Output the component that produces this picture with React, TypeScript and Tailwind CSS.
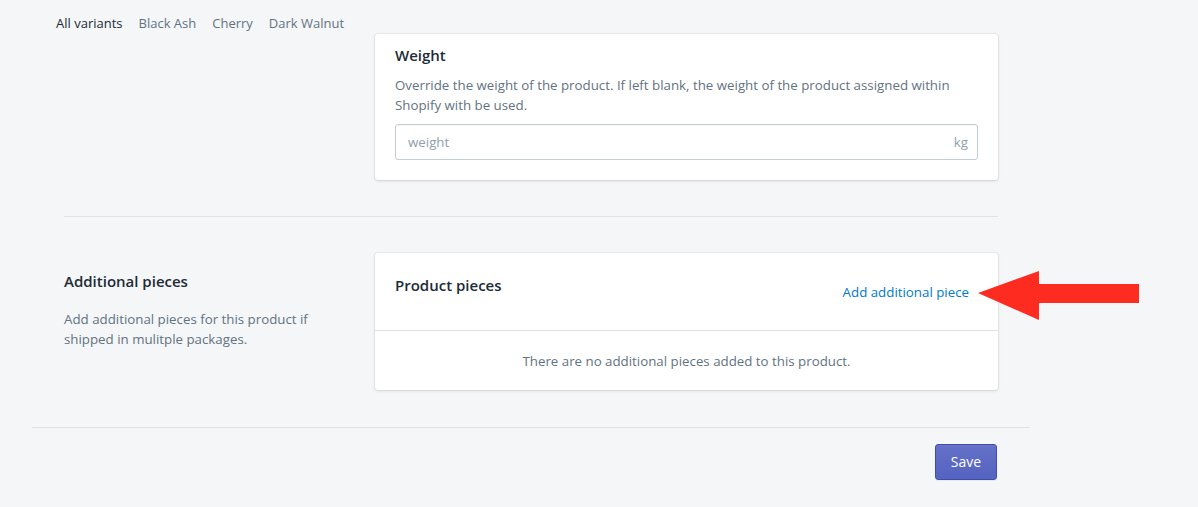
import React from 'react'

const variants = ['All variants', 'Black Ash', 'Cherry', 'Dark Walnut']

function Card({ children, className = '' }: { children: React.ReactNode; className?: string }) {
    return (
        <div
            className={`bg-white rounded-[3px] shadow-[0_0_0_1px_rgba(63,63,68,0.05),0_1px_3px_0_rgba(63,63,68,0.15)] ${className}`}
        >
            {children}
        </div>
    )
}

export default function App() {
    return (
        <div
            className="relative min-h-[507px] bg-[#f4f6f8] text-[13.3px] leading-[20px] text-[#212b36]"
            style={{ fontFamily: '"Open Sans", "Noto Sans", sans-serif' }}
        >
            <div className="ml-[32px] w-[998px]">
                {/* variant tabs */}
                <div className="flex h-[34px] gap-[16px] pl-[24px] pt-[13px] text-[13px]">
                    {variants.map((v, i) => (
                        <span key={v} className={i === 0 ? 'text-[#212b36]' : 'text-[#637381]'}>
                            {v}
                        </span>
                    ))}
                </div>

                <div className="px-[32px]">
                    {/* weight section */}
                    <div className="grid grid-cols-[311px_1fr]">
                        <div />
                        <Card className="px-[20px] pt-[9px] pb-[20px]">
                            <h2 className="text-[15px] leading-[24px] font-semibold">Weight</h2>
                            <p className="mt-[8px] text-[#637381]">
                                Override the weight of the product. If left blank, the weight of the product assigned within
                                Shopify with be used.
                            </p>
                            <div className="mt-[9px] flex h-[36px] items-center rounded-[3px] border border-[#c4cdd5] pl-[12px] pr-[9px] shadow-[inset_0_1px_0_0_rgba(99,115,129,0.05)]">
                                <span className="flex-1 text-[#919eab]">weight</span>
                                <span className="text-[#919eab]">kg</span>
                            </div>
                        </Card>
                    </div>

                    <div className="mt-[36px] border-t border-[#dfe3e8]" />

                    {/* additional pieces section */}
                    <div className="mt-[36px] grid grid-cols-[311px_1fr]">
                        <div className="pt-[16px] pr-[40px]">
                            <h2 className="text-[15px] leading-[24px] font-semibold">Additional pieces</h2>
                            <p className="mt-[16px] text-[#637381]">
                                Add additional pieces for this product if shipped in mulitple packages.
                            </p>
                        </div>
                        <Card>
                            <div className="flex h-[78px] justify-between pl-[20px] pr-[29px] pt-[20px] border-b border-[#dfe3e8]">
                                <h2 className="text-[15px] leading-[24px] font-semibold">Product pieces</h2>
                                <button className="mt-[9px] h-[20px] text-[#007ace]">Add additional piece</button>
                            </div>
                            <div className="flex h-[59px] items-center justify-center text-[#637381]">
                                There are no additional pieces added to this product.
                            </div>
                        </Card>
                    </div>
                </div>

                {/* footer */}
                <div className="mt-[37px] border-t border-[#dfe3e8]" />
                <div className="flex justify-end pr-[33px] pt-[16px]">
                    <button className="h-[36px] w-[62px] rounded-[3px] border border-[#3f4eae] bg-gradient-to-b from-[#6371c7] to-[#5563c1] text-[14px] text-white shadow-[inset_0_1px_0_0_#6774c8,0_1px_0_0_rgba(22,29,37,0.05)]">
                        Save
                    </button>
                </div>
            </div>

            {/* red annotation arrow */}
            <svg
                className="absolute left-[978px] top-[270px]"
                width="162"
                height="51"
                viewBox="0 0 162 51"
            >
                <polygon points="0,23 61,1 61,14 161,14 161,33 61,33 61,50" fill="#fd2b20" />
            </svg>
        </div>
    )
}
